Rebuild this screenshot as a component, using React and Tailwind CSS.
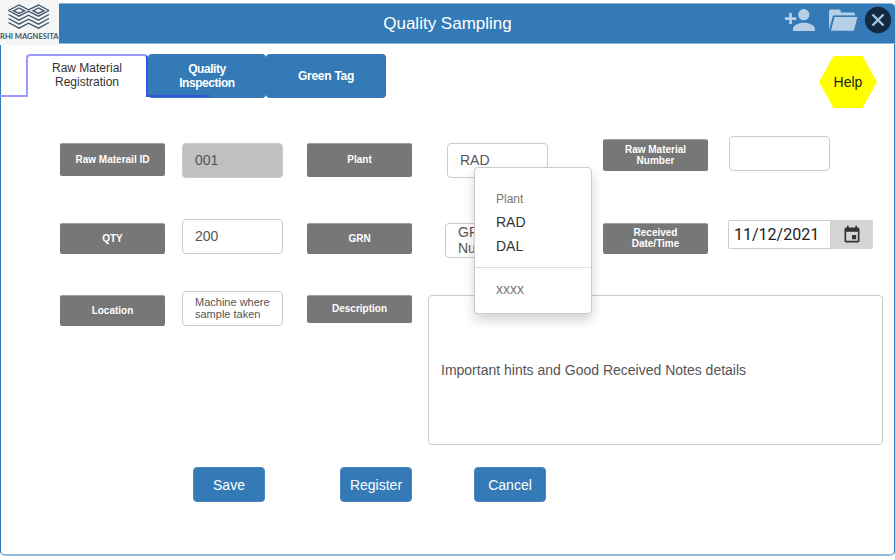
import React from "react";

function Label({ children, className = "" }) {
  return (
    <div className={`flex w-[105px] items-center justify-center rounded-[2px] border-t border-[#a0a0a0] bg-[#777777] pb-[2px] text-center text-[10px] leading-[11px] font-bold text-white ${className}`}>
      {children}
    </div>
  );
}

function Field({ children, text = "text-[14px]", className = "" }) {
  return (
    <div className={`flex h-[35px] w-[101px] items-center rounded-[4px] border border-[#cccccc] pl-[12px] text-[#555555] ${text} ${className}`}>
      {children}
    </div>
  );
}

function Action({ children, className = "" }) {
  return (
    <button className={`h-[35px] w-[72px] rounded-[4px] border border-[#4a87bc] bg-[#337ab7] pt-[2px] text-[14px] text-white ${className}`}>
      {children}
    </button>
  );
}

function Logo() {
  return (
    <div className="absolute top-0 left-0 z-10 h-[45px] w-[59px] bg-[#f5f5f5]">
      <svg width="59" height="45" viewBox="0 0 59 45">
        <g fill="none" stroke="#40566a" strokeWidth="1.4">
          <path d="M8.500 10.500 19 5 28.500 9.800 38.500 5 49 10.500" />
          <path d="M13.500 10.800 19 8 24.500 10.800 19 13.500z" />
          <path d="M33 10.800 38.500 8 44 10.800 38.500 13.500z" />
          <path d="M8.500 10.500 19 16.200 28.500 11.200 38.500 16.200 49 10.500" />
          <path d="M8.500 14.500 19 20.200 28.500 15.200 38.500 20.200 49 14.500" />
          <path d="M8.500 18.500 19 24.200 28.500 19.200 38.500 24.200 49 18.500" />
          <path d="M8.500 22.500 19 28.200 28.500 23.200 38.500 28.200 49 22.500" />
        </g>
        <text x="0" y="39" textLength="58.500" lengthAdjust="spacingAndGlyphs" fill="#40566a" fontSize="7.500" fontWeight="700" fontFamily="Lato, sans-serif">RHI MAGNESITA</text>
      </svg>
    </div>
  );
}

function HeaderIcons() {
  return (
    <div className="absolute -top-px right-0 flex h-[40px] w-[115px]">
      <svg width="115" height="40" viewBox="780 3 115 40">
        <g fill="#b7cfe5">
          <circle cx="803.800" cy="14.700" r="5.600" />
          <path d="M793 31v-2.500c0-3.700 7.200-5.700 10.900-5.700s11 2 11 5.700V31z" />
          <path d="M789.200 13h2.700v4.200h4.300v2.700h-4.300v4.200h-2.700v-4.200H785v-2.700h4.200z" />
          <path d="M829 30.500V11.200q0-1.700 1.700-1.700h8.500q1.500 0 1.500 1.500v1.500h12.500q1.700 0 1.700 1.700v1.300h-20.700q-1.200 0-1.600 1.200z" />
          <path d="M834.500 17H857.500l-3.700 13.800h-23z" />
          <path d="M857.500 16.400H833.800L830.500 29.500" fill="none" stroke="#337ab7" strokeWidth="1.200" />
        </g>
        <circle cx="878" cy="20" r="13.200" fill="#132b41" />
        <path d="M872.500 14.500l11 11M883.500 14.500l-11 11" stroke="#a9c4dd" strokeWidth="2.400" />
      </svg>
    </div>
  );
}

export default function App() {
  return (
    <div className="h-[560px] w-[895px] overflow-hidden bg-white pt-[3px] font-['Liberation_Sans',Arial,sans-serif]">
      <Logo />
      <main className="h-[553px] rounded-[5px] border-x border-b-2 border-x-[#337ab7] border-b-[#99bcdb]">
        <header className="relative -mx-px flex h-[41px] items-center justify-center rounded-tr-[5px] border-y border-[#8fb5d7] bg-[#337ab7] text-[17px] text-white">
          <h1>Quality Sampling</h1>
          <HeaderIcons />
        </header>

        <div className="-ml-px flex h-[65px] pt-[10px]">
          <nav className="flex h-[44px] text-center text-[12px] leading-[14px]">
            <div className="mt-auto mb-px h-[2px] w-[26px] bg-[#9999ff]" />
            <div className="h-[43px] w-[122px] rounded-t-[4px] border-x-2 border-t-2 border-x-[#9999ff] border-t-[#9999ff] border-r-[#3355dd] pt-[5px] text-[#333333]">
              Raw Material<br />Registration
            </div>
            <div className="relative flex w-[118px] items-center justify-center rounded-[4px] bg-[#337ab7] font-bold tracking-[-0.450px] text-white">
              Quality<br />Inspection
              <div className="absolute bottom-[1px] -left-px h-[2px] w-[63px] bg-[#3355dd]" />
            </div>
            <div className="flex w-[120px] items-center justify-center rounded-[4px] bg-[#337ab7] font-bold tracking-[-0.250px] text-white">
              Green Tag
            </div>
          </nav>
          <div className="mt-[2px] ml-[433px] flex h-[52px] w-[58px] items-center justify-center bg-[#ffff00] text-[14px] text-[#222222] [clip-path:polygon(25%_0,75%_0,100%_50%,75%_100%,25%_100%,0_50%)]">
            Help
          </div>
        </div>

        <form className="flex pl-[59px]">
          <div className="flex w-[122px] flex-col pt-[34px]">
            <Label className="h-[33px]">Raw Materail ID</Label>
            <Label className="mt-[47px] h-[31px]">QTY</Label>
            <Label className="mt-[41px] h-[31px]">Location</Label>
          </div>
          <div className="flex w-[125px] flex-col pt-[34px]">
            <Field className="bg-[#c0c0c0]">001</Field>
            <Field className="mt-[41px]">200</Field>
            <Field text="text-[11px] leading-[12px]" className="mt-[37px] pb-[2px] whitespace-nowrap">Machine where<br />sample taken</Field>
          </div>
          <div className="flex w-[121px] flex-col pt-[34px]">
            <Label className="h-[34px]">Plant</Label>
            <Label className="mt-[46px] h-[31px]">GRN</Label>
            <Label className="mt-[41px] h-[28px]">Description</Label>
          </div>
          <div>
            <div className="flex h-[186px]">
              <div className="w-[175px] pt-[34px] pl-[17px]">
                <Field className="ml-[2px]">RAD</Field>
                <Field text="text-[14px] leading-[16px]" className="mt-[45px] pb-[2px]">GRN<br />Number</Field>
              </div>
              <div className="w-[126px] pt-[30px]">
                <Label className="h-[32px]">Raw Material<br />Number</Label>
                <Label className="mt-[52px] h-[31px]">Received<br />Date/Time</Label>
              </div>
              <div className="pt-[27px]">
                <Field />
                <div className="mt-[49px] -ml-px flex h-[29px] w-[145px] overflow-hidden rounded-[2px]">
                  <div className="flex w-[103px] items-center border border-[#cccccc] pl-[5px] font-[Roboto] text-[16px] text-[#222222]">11/12/2021</div>
                  <div className="flex w-[42px] items-center justify-center bg-[#d5d5d5]">
                    <svg width="20" height="20" viewBox="0 0 24 24" fill="#333333">
                      <path d="M17 12h-5v5h5v-5zM16 1v2H8V1H6v2H5c-1.110 0-1.990.9-1.990 2L3 19c0 1.100.89 2 2 2h14c1.100 0 2-.9 2-2V5c0-1.100-.9-2-2-2h-1V1h-2zm3 18H5V8h14v11z" />
                    </svg>
                  </div>
                </div>
              </div>
            </div>
            <div className="flex h-[150px] w-[455px] items-center rounded-[4px] border border-[#cccccc] pt-[1px] pl-[12px] text-[14px] text-[#555555]">
              Important hints and Good Received Notes details
            </div>
          </div>
        </form>

        <div className="mt-[22px] flex pl-[192px]">
          <Action>Save</Action>
          <Action className="ml-[75px]">Register</Action>
          <Action className="ml-[62px]">Cancel</Action>
        </div>
      </main>

      <div className="absolute top-[167px] left-[474px] z-20 h-[147px] w-[118px] rounded-[4px] border border-[#cccccc] bg-white pt-[20px] shadow-[0_6px_12px_rgba(0,0,0,0.175)]">
        <div className="pl-[21px] text-[12px] leading-[22px] text-[#777777]">Plant</div>
        <div className="pl-[21px] text-[14px] leading-[24px] text-[#333333]">RAD</div>
        <div className="pl-[21px] text-[14px] leading-[24px] text-[#333333]">DAL</div>
        <div className="mt-[9px] border-t border-[#dddddd] pt-[11px] pl-[21px] text-[14px] leading-[21px] text-[#777777]">xxxx</div>
      </div>
    </div>
  );
}
